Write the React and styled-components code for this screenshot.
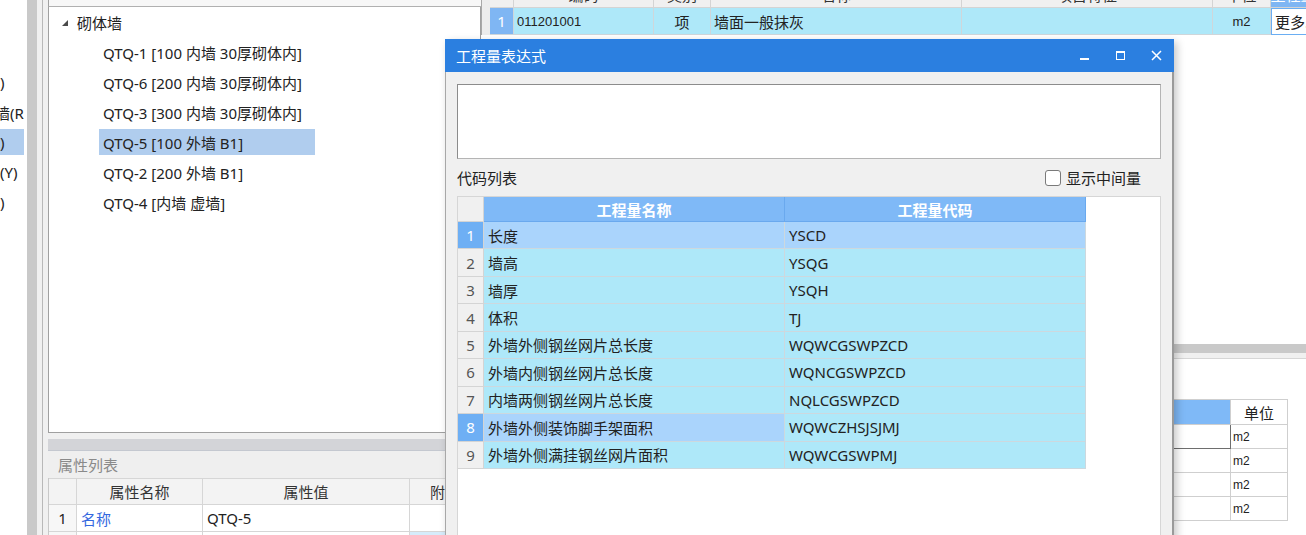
import React from 'react';
import styled, {createGlobalStyle} from 'styled-components';

const FONT = `"Noto Sans", "Noto Sans CJK SC", sans-serif`;

const Global = createGlobalStyle`
  html, body {
    margin: 0;
    padding: 0;
    background: #fff;
  }
  body {
    font-family: ${FONT};
    color: #222;
  }
  * {
    box-sizing: border-box;
  }
`;

const Page = styled.div`
  position: relative;
  display: flex;
  width: 1306px;
  height: 535px;
  overflow: hidden;
  background: #fff;
`;

/* ---------- far left strip (cut tree) ---------- */
const Strip = styled.div`
  width: 27px;
  flex: none;
  padding-top: 67px;
  overflow: hidden;
  background: #fff;
`;
const StripItem = styled.div`
  height: 30px;
  display: flex;
  align-items: center;
`;
const StripLabel = styled.span`
  display: flex;
  align-items: center;
  height: 26px;
  width: 24px;
  margin-left: ${p => p.$shift || 0}px;
  font-size: 15px;
  white-space: nowrap;
  background: ${p => (p.$selected ? '#b0cdee' : 'transparent')};
`;

const Splitter = styled.div`
  width: 10px;
  flex: none;
  background: #c9c9c9;
`;
const Gutter = styled.div`
  width: 11px;
  flex: none;
  background: #f0f0f0;
  border-right: 5px solid #f0f0f0;
  box-shadow: inset -6px 0 0 -5px #b8b8b8;
`;

/* ---------- left column ---------- */
const LeftCol = styled.div`
  width: 433px;
  flex: none;
  display: flex;
  flex-direction: column;
  background: #f0f0f0;
  & > * {
    flex-shrink: 0;
  }
`;
const SearchBox = styled.div`
  height: 7px;
  background: #f7f7f7;
  border-bottom: 1px solid #b0b0b0;
  border-left: 1px solid #a0a0a0;
`;
const TreePanel = styled.div`
  height: 426px;
  background: #fff;
  border-left: 1px solid #a0a0a0;
  border-bottom: 1px solid #a0a0a0;
  border-right: 1px solid #a0a0a0;
`;
const TreeParent = styled.div`
  height: 30px;
  display: flex;
  align-items: center;
  padding-left: 13px;
  font-size: 15px;
`;
const Arrow = styled.span`
  width: 0;
  height: 0;
  margin-right: 9px;
  margin-top: 2px;
  border-style: solid;
  border-width: 0 0 6px 6px;
  border-color: transparent transparent #4a4a4a transparent;
`;
const TreeChild = styled.div`
  height: 30px;
  display: flex;
  align-items: center;
  padding-left: 50px;
`;
const ChildLabel = styled.span`
  display: flex;
  align-items: center;
  width: 216px;
  height: 26px;
  padding-left: 4px;
  font-size: 15px;
  white-space: nowrap;
  background: ${p => (p.$selected ? '#b0cdee' : 'transparent')};
`;

const SectionBar = styled.div`
  height: 12px;
  margin-top: 6px;
  background: #d3d4d8;
  border-bottom: 1px solid #c4c8d0;
`;
const SectionTitle = styled.div`
  height: 27px;
  display: flex;
  align-items: center;
  padding-left: 10px;
  font-size: 15px;
  color: #8a8a8a;
  background: #efefef;
`;
const PropGrid = styled.div`
  display: grid;
  grid-template-columns: 28px 126px 207px 1fr;
  border-left: 1px solid #c8c8c8;
  background: #fff;
`;
const PropHead = styled.div`
  height: 27px;
  display: flex;
  align-items: center;
  justify-content: center;
  font-size: 15px;
  color: #333;
  background: #f3f3f3;
  border-right: 1px solid #d6d6d6;
  border-bottom: 1px solid #d6d6d6;
  border-top: 1px solid #d6d6d6;
  overflow: hidden;
  white-space: nowrap;
`;
const PropCell = styled.div`
  height: 27px;
  display: flex;
  align-items: center;
  justify-content: ${p => (p.$center ? 'center' : 'flex-start')};
  padding-left: ${p => (p.$center ? 0 : 4)}px;
  font-size: 15px;
  color: ${p => p.$color || '#222'};
  background: ${p => p.$bg || '#fff'};
  border-right: 1px solid #d6d6d6;
  border-bottom: 1px solid #d6d6d6;
`;

/* ---------- right column ---------- */
const RightCol = styled.div`
  flex: 1;
  display: flex;
  flex-direction: column;
  min-width: 0;
  background: #fff;
  & > * {
    flex-shrink: 0;
  }
`;
const TopTable = styled.div`
  display: flex;
  flex-direction: column;
  padding-left: 8px;
  background: #ececec;
  border-left: 1px solid #a8a8a8;
`;
const TopRow = styled.div`
  display: grid;
  grid-template-columns: 24px 140px 57px 251px 251px 58px 90px;
  margin-top: ${p => p.$offset || 0}px;
`;
const TopHead = styled.div`
  height: 26px;
  display: flex;
  align-items: center;
  justify-content: center;
  font-size: 15px;
  white-space: nowrap;
  overflow: hidden;
  color: ${p => (p.$active ? '#fff' : '#333')};
  background: ${p => (p.$active ? '#7fb6f3' : '#f0f0f0')};
  border-right: 1px solid #d4d4d4;
  border-bottom: 1px solid #d4d4d4;
`;
const TopCell = styled.div`
  height: 27px;
  display: flex;
  align-items: center;
  justify-content: ${p => (p.$center ? 'center' : 'flex-start')};
  padding-left: ${p => (p.$center ? 0 : 3)}px;
  font-family: ${p => (p.$narrow ? '"Liberation Sans", sans-serif' : FONT)};
  font-size: ${p => (p.$narrow ? 13 : 15)}px;
  white-space: nowrap;
  overflow: hidden;
  color: ${p => p.$color || '#222'};
  background: ${p => p.$bg || '#aee8f9'};
  border-right: 1px solid #cfd6da;
  border-bottom: 1px solid #cfd6da;
  ${p => p.$focus && 'border: 1px solid #6aaef3; background: #fff;'}
`;

const Filler = styled.div`
  flex: 1;
`;
const LowerBar = styled.div`
  height: 9px;
  background: #c9c9c9;
`;
const LowerStrip = styled.div`
  height: 6px;
  background: #f0f0f0;
  border-bottom: 1px solid #d6d6d6;
`;
const LowerSpace = styled.div`
  height: 40px;
`;
const LowerTable = styled.div`
  display: grid;
  grid-template-columns: 540px 57px;
  justify-content: end;
  padding-right: 18px;
  height: 136px;
  align-content: start;
`;
const LowerHead = styled.div`
  height: 26px;
  display: flex;
  align-items: center;
  justify-content: center;
  font-size: 15px;
  color: #222;
  background: ${p => (p.$active ? '#7fb9f7' : '#fff')};
  border-right: 1px solid #cfcfcf;
  border-top: 1px solid #cfcfcf;
  border-bottom: 1px solid #cfcfcf;
`;
const LowerCell = styled.div`
  height: 24px;
  display: flex;
  align-items: center;
  padding-left: 2px;
  font-family: "Liberation Sans", sans-serif;
  font-size: 12px;
  color: #222;
  border-right: 1px solid ${p => (p.$focus ? '#6e6e6e' : '#cfcfcf')};
  border-bottom: 1px solid ${p => (p.$focus ? '#6e6e6e' : '#cfcfcf')};
`;

/* ---------- dialog ---------- */
const Dialog = styled.div`
  position: absolute;
  left: 445px;
  top: 39px;
  width: 729px;
  height: 520px;
  display: flex;
  flex-direction: column;
  background: #f0f0f0;
  border-left: 1px solid #a8a8a8;
  border-right: 2px solid #9a9a9a;
  box-shadow: 3px 3px 8px rgba(0, 0, 0, 0.22);
`;
const TitleBar = styled.div`
  height: 33px;
  display: flex;
  align-items: center;
  margin: 0 -2px 0 -1px;
  padding-left: 11px;
  background: #2b7fe0;
  color: #fff;
  font-size: 15px;
`;
const TitleText = styled.div`
  flex: 1;
`;
const WinButton = styled.div`
  width: 36px;
  height: 33px;
  display: flex;
  align-items: center;
  justify-content: center;
`;
const Body = styled.div`
  flex: 1;
  display: flex;
  flex-direction: column;
  padding: 12px 10px 0 11px;
`;
const ExprBox = styled.div`
  height: 75px;
  width: 704px;
  background: #fff;
  border: 1px solid #b4b4b4;
  border-top-color: #8c8c8c;
  border-left-color: #8c8c8c;
`;
const ListHeader = styled.div`
  height: 37px;
  width: 704px;
  display: flex;
  align-items: center;
  justify-content: space-between;
  padding-right: 20px;
  font-size: 15px;
  color: #222;
`;
const CheckWrap = styled.label`
  display: flex;
  align-items: center;
  gap: 5px;
`;
const CheckBox = styled.span`
  width: 16px;
  height: 16px;
  border: 1px solid #7a7a7a;
  border-radius: 3px;
  background: #fff;
`;
const CodeTable = styled.div`
  flex: 1;
  width: 704px;
  background: #fff;
  border: 1px solid #d6d6d6;
`;
const CodeGrid = styled.div`
  display: grid;
  grid-template-columns: 26px 301px 301px;
  grid-auto-rows: 27.44px;
  grid-template-rows: 25px;
`;
const NumHead = styled.div`
  background: #f0f0f0;
  border-right: 1px solid #d4d4d4;
  border-bottom: 1px solid #d4d4d4;
`;
const CodeHead = styled.div`
  display: flex;
  align-items: center;
  justify-content: center;
  font-size: 15px;
  font-weight: 700;
  color: #fff;
  background: #7fb9f7;
  border-right: 1px solid #6aa9ee;
  border-bottom: 1px solid #6aa9ee;
`;
const NumCell = styled.div`
  display: flex;
  align-items: center;
  justify-content: center;
  font-size: 15px;
  color: ${p => (p.$selected ? '#fff' : '#555')};
  background: ${p => (p.$selected ? '#6eaff4' : '#f0f0f0')};
  border-right: 1px solid #d4d4d4;
  border-bottom: 1px solid #d4d4d4;
`;
const CodeCell = styled.div`
  display: flex;
  align-items: center;
  padding-left: 4px;
  font-size: 15px;
  color: #222;
  white-space: nowrap;
  background: ${p => (p.$selected ? '#aad4fc' : '#aee8f9')};
  border-right: 1px solid #cdd8de;
  border-bottom: 1px solid #cdd8de;
`;

const stripItems = [
  {text: ')', shift: 0},
  {text: '墙(R', shift: -5},
  {text: ')', shift: 0, selected: true},
  {text: '(Y)', shift: 0},
  {text: ')', shift: 0},
];

const treeItems = [
  'QTQ-1 [100 内墙 30厚砌体内]',
  'QTQ-6 [200 内墙 30厚砌体内]',
  'QTQ-3 [300 内墙 30厚砌体内]',
  'QTQ-5 [100 外墙 B1]',
  'QTQ-2 [200 外墙 B1]',
  'QTQ-4 [内墙 虚墙]',
];

const quantities = [
  ['长度', 'YSCD'],
  ['墙高', 'YSQG'],
  ['墙厚', 'YSQH'],
  ['体积', 'TJ'],
  ['外墙外侧钢丝网片总长度', 'WQWCGSWPZCD'],
  ['外墙内侧钢丝网片总长度', 'WQNCGSWPZCD'],
  ['内墙两侧钢丝网片总长度', 'NQLCGSWPZCD'],
  ['外墙外侧装饰脚手架面积', 'WQWCZHSJSJMJ'],
  ['外墙外侧满挂钢丝网片面积', 'WQWCGSWPMJ'],
];

const MinIcon = () => (
  <svg width="11" height="11" viewBox="0 0 11 11">
    <rect x="1" y="8" width="9" height="2" fill="#fff" />
  </svg>
);
const MaxIcon = () => (
  <svg width="11" height="11" viewBox="0 0 11 11">
    <rect x="1.5" y="1.5" width="8" height="8" fill="none" stroke="#fff" strokeWidth="1" />
    <rect x="1" y="1" width="9" height="2" fill="#fff" />
  </svg>
);
const CloseIcon = () => (
  <svg width="11" height="11" viewBox="0 0 11 11">
    <path d="M1 1 L10 10 M10 1 L1 10" stroke="#fff" strokeWidth="1.5" />
  </svg>
);

const App = () => (
  <Page>
    <Global />
    <Strip>
      {stripItems.map((it, i) => (
        <StripItem key={i}>
          <StripLabel $shift={it.shift} $selected={it.selected}>{it.text}</StripLabel>
        </StripItem>
      ))}
    </Strip>
    <Splitter />
    <Gutter />

    <LeftCol>
      <SearchBox />
      <TreePanel>
        <TreeParent>
          <Arrow />
          砌体墙
        </TreeParent>
        {treeItems.map((t, i) => (
          <TreeChild key={t}>
            <ChildLabel $selected={i === 3}>{t}</ChildLabel>
          </TreeChild>
        ))}
      </TreePanel>
      <SectionBar />
      <SectionTitle>属性列表</SectionTitle>
      <PropGrid>
        <PropHead />
        <PropHead>属性名称</PropHead>
        <PropHead>属性值</PropHead>
        <PropHead>附加</PropHead>
        <PropCell $center $bg="#f7f7f7">1</PropCell>
        <PropCell $color="#3468e0">名称</PropCell>
        <PropCell>QTQ-5</PropCell>
        <PropCell />
        <PropCell $bg="#f7f7f7" />
        <PropCell />
        <PropCell />
        <PropCell $bg="#d6ecfb" />
      </PropGrid>
    </LeftCol>

    <RightCol>
      <TopTable>
        <TopRow $offset={-18}>
          <TopHead />
          <TopHead>编码</TopHead>
          <TopHead>类别</TopHead>
          <TopHead>名称</TopHead>
          <TopHead>项目特征</TopHead>
          <TopHead>单位</TopHead>
          <TopHead $active>工程量表达式</TopHead>
        </TopRow>
        <TopRow>
          <TopCell $center $bg="#7fb6f3" $color="#fff">1</TopCell>
          <TopCell $narrow>011201001</TopCell>
          <TopCell $center>项</TopCell>
          <TopCell>墙面一般抹灰</TopCell>
          <TopCell />
          <TopCell $center $narrow>m2</TopCell>
          <TopCell $focus>更多...</TopCell>
        </TopRow>
      </TopTable>
      <Filler />
      <LowerBar />
      <LowerStrip />
      <LowerSpace />
      <LowerTable>
        <LowerHead $active />
        <LowerHead>单位</LowerHead>
        {[0, 1, 2, 3].map(i => (
          <React.Fragment key={i}>
            <LowerCell $focus={i === 0} />
            <LowerCell>m2</LowerCell>
          </React.Fragment>
        ))}
      </LowerTable>
    </RightCol>

    <Dialog>
      <TitleBar>
        <TitleText>工程量表达式</TitleText>
        <WinButton><MinIcon /></WinButton>
        <WinButton><MaxIcon /></WinButton>
        <WinButton><CloseIcon /></WinButton>
      </TitleBar>
      <Body>
        <ExprBox />
        <ListHeader>
          <span>代码列表</span>
          <CheckWrap>
            <CheckBox />
            显示中间量
          </CheckWrap>
        </ListHeader>
        <CodeTable>
          <CodeGrid>
            <NumHead />
            <CodeHead>工程量名称</CodeHead>
            <CodeHead>工程量代码</CodeHead>
            {quantities.map(([name, code], i) => {
              const sel = i === 0 || i === 7;
              return (
                <React.Fragment key={code}>
                  <NumCell $selected={sel}>{i + 1}</NumCell>
                  <CodeCell $selected={sel}>{name}</CodeCell>
                  <CodeCell $selected={i === 0}>{code}</CodeCell>
                </React.Fragment>
              );
            })}
          </CodeGrid>
        </CodeTable>
      </Body>
    </Dialog>
  </Page>
);

export default App;
